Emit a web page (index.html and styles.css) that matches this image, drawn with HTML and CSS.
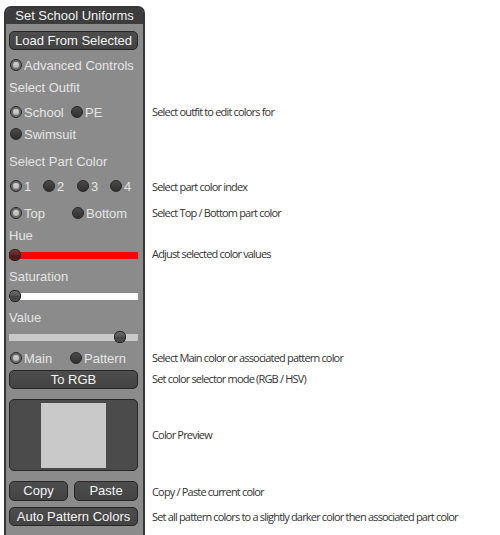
FILE: index.html
```html
<!DOCTYPE html>
<html>
<head>
<meta charset="utf-8">
<link rel="stylesheet" href="styles.css">
</head>
<body>
<div class="page">
  <div class="panel">
    <div class="title">Set School Uniforms</div>
    <div class="btn btn-load">Load From Selected</div>
    <div class="row mt5"><span class="radio on"></span><span>Advanced Controls</span></div>
    <div class="row mt2">Select Outfit</div>
    <div class="row mt5">
      <span class="opt w61"><span class="radio on"></span>School</span>
      <span class="opt"><span class="radio"></span>PE</span>
    </div>
    <div class="row mt2"><span class="opt"><span class="radio"></span>Swimsuit</span></div>
    <div class="row mt7">Select Part Color</div>
    <div class="row mt5">
      <span class="opt w33"><span class="radio on"></span>1</span>
      <span class="opt w34"><span class="radio"></span>2</span>
      <span class="opt w33"><span class="radio"></span>3</span>
      <span class="opt"><span class="radio"></span>4</span>
    </div>
    <div class="row mt7">
      <span class="opt w62"><span class="radio on"></span>Top</span>
      <span class="opt"><span class="radio"></span>Bottom</span>
    </div>
    <div class="row mt2">Hue</div>
    <div class="row slider">
      <div class="track track-hue"></div>
      <div class="thumb thumb-hue"></div>
    </div>
    <div class="row mt1">Saturation</div>
    <div class="row slider">
      <div class="track track-sat"></div>
      <div class="thumb"></div>
    </div>
    <div class="row mt1">Value</div>
    <div class="row slider">
      <div class="track track-val"></div>
      <div class="thumb" style="left: 105px"></div>
    </div>
    <div class="row mt1">
      <span class="opt w60"><span class="radio on"></span>Main</span>
      <span class="opt"><span class="radio"></span>Pattern</span>
    </div>
    <div class="btn mt2">To RGB</div>
    <div class="preview"><div class="swatch"></div></div>
    <div class="btn-pair">
      <div class="btn btn-copy">Copy</div>
      <div class="btn btn-paste">Paste</div>
    </div>
    <div class="btn btn-auto">Auto Pattern Colors</div>
  </div>
  <div class="help">
    <div class="desc d1">Select outfit to edit colors for</div>
    <div class="desc d2">Select part color index</div>
    <div class="desc d3">Select Top / Bottom part color</div>
    <div class="desc d4">Adjust selected color values</div>
    <div class="desc d5">Select Main color or associated pattern color</div>
    <div class="desc d6">Set color selector mode (RGB / HSV)</div>
    <div class="desc d7">Color Preview</div>
    <div class="desc d8">Copy / Paste current color</div>
    <div class="desc d9">Set all pattern colors to a slightly darker color then associated part color</div>
  </div>
</div>
</body>
</html>
```

FILE: styles.css
```css
html, body {
  margin: 0;
  padding: 0;
  background: #ffffff;
  overflow: hidden;
}

.page {
  display: flex;
  align-items: stretch;
  height: 535px;
  padding: 6px 0 0 4px;
  box-sizing: border-box;
}

.panel {
  width: 141px;
  box-sizing: border-box;
  background: #8b8b8b;
  border: 2px solid #363636;
  border-bottom: none;
  border-radius: 7px 7px 0 0;
  padding: 0 5px 0 3px;
  display: flex;
  flex-direction: column;
  font-family: "Liberation Sans", Arial, sans-serif;
  font-size: 13px;
  color: #e4e4e4;
}

.title {
  background: #3c3c3c;
  margin: 0 -5px 0 -3px;
  height: 16px;
  line-height: 15px;
  text-align: center;
  color: #f2f2f2;
  border-radius: 5px 5px 0 0;
}

.btn {
  height: 19px;
  box-sizing: border-box;
  border: 1px solid #262626;
  border-radius: 5px;
  background: linear-gradient(#4d4d4d, #434343);
  color: #f4f4f4;
  text-align: center;
  line-height: 17px;
  white-space: nowrap;
  flex: none;
}

.btn-load { margin-top: 7px; }
.btn-auto { margin-top: 6px; }

.btn-pair {
  display: flex;
  gap: 6px;
  margin-top: 10px;
  flex: none;
}

.btn-copy { width: 59px; height: 20px; line-height: 18px; }
.btn-paste { flex: 1; height: 20px; line-height: 18px; }

.row {
  height: 20px;
  display: flex;
  align-items: center;
  white-space: nowrap;
  flex: none;
}

.mt1 { margin-top: 1px; }
.mt2 { margin-top: 2px; }
.mt5 { margin-top: 5px; }
.mt7 { margin-top: 7px; }

.opt {
  display: flex;
  align-items: center;
}

.w33 { width: 33px; }
.w34 { width: 34px; }
.w60 { width: 60px; }
.w61 { width: 61px; }
.w62 { width: 62px; }

.radio {
  position: relative;
  width: 12px;
  height: 12px;
  box-sizing: border-box;
  margin: 0 2px 0 1px;
  border-radius: 50%;
  border: 1px solid #262626;
  background: linear-gradient(#4a4a4a, #303030);
  flex: none;
}

.radio.on {
  background: #6e6e6e;
}

.radio.on::after {
  content: "";
  position: absolute;
  left: 2px;
  top: 2px;
  width: 6px;
  height: 6px;
  box-sizing: border-box;
  border-radius: 50%;
  background: linear-gradient(#d6d6d6, #b4b4b4);
}

.slider {
  position: relative;
}

.track {
  width: 129px;
  height: 7px;
}

.track-hue { background: #ff0000; }
.track-sat { background: #ffffff; }
.track-val { background: #c9c9c9; }

.thumb {
  position: absolute;
  left: 0;
  top: 4px;
  width: 12px;
  height: 12px;
  box-sizing: border-box;
  border: 1px solid #262626;
  border-radius: 5px;
  background: linear-gradient(#6a6a6a 0%, #555 45%, #444 55%, #4a4a4a 100%);
}

.thumb-hue {
  background: linear-gradient(#7a3434 0%, #652525 45%, #521818 55%, #5a1d1d 100%);
}

.preview {
  margin-top: 10px;
  height: 72px;
  box-sizing: border-box;
  border: 1px solid #262626;
  border-radius: 5px;
  background: #4b4b4b;
  display: flex;
  justify-content: center;
  align-items: center;
  flex: none;
}

.swatch {
  width: 65px;
  height: 65px;
  background: #c9c9c9;
}

.help {
  margin-left: 7px;
  padding-top: 96px;
  font-family: "Open Sans", "DejaVu Sans", sans-serif;
  font-size: 11px;
  letter-spacing: -0.82px;
  color: #333333;
}

.desc {
  height: 20px;
  line-height: 20px;
  white-space: nowrap;
}

.d2 { margin-top: 55px; }
.d3 { margin-top: 6px; }
.d4 { margin-top: 21px; }
.d5 { margin-top: 84px; }
.d6 { margin-top: 1px; }
.d7 { margin-top: 36px; }
.d8 { margin-top: 37px; }
.d9 { margin-top: 5px; }
```
